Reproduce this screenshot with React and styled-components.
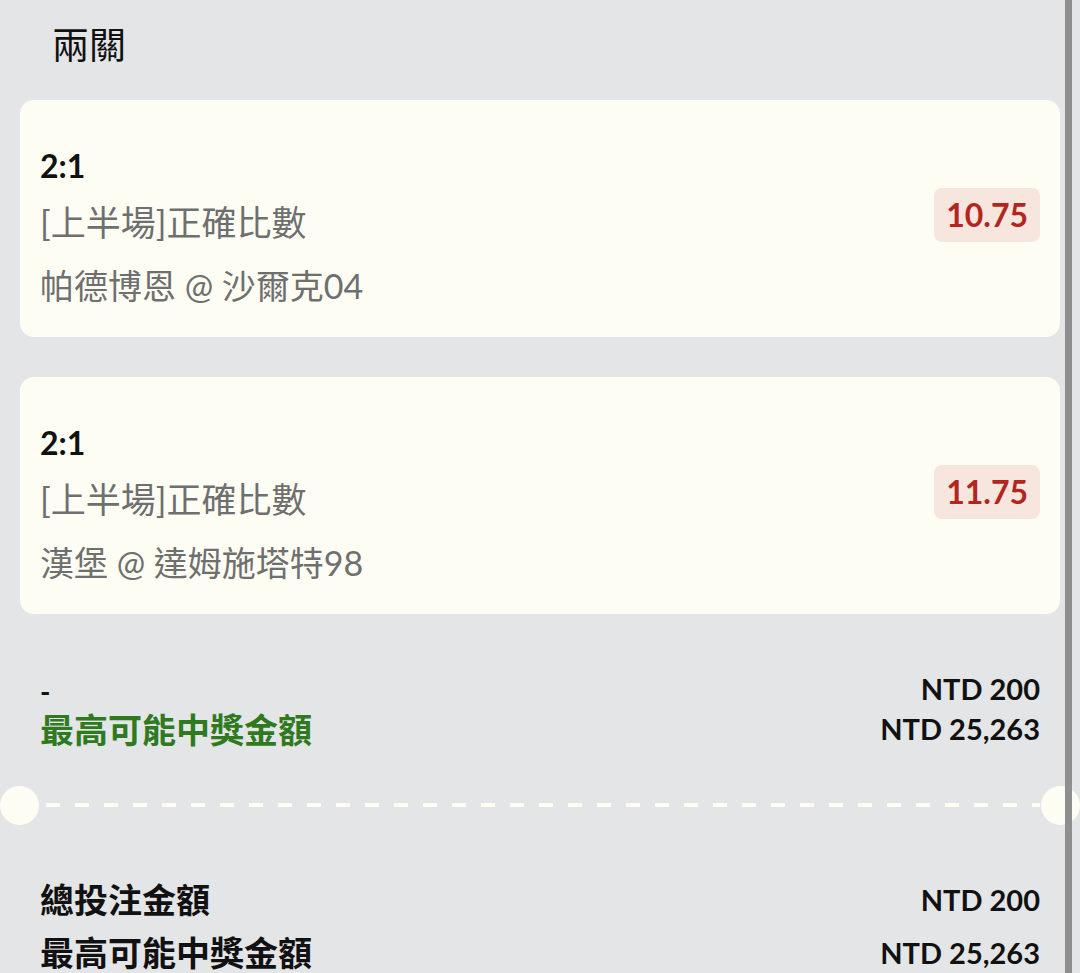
import styled, { createGlobalStyle } from "styled-components";

const GlobalStyle = createGlobalStyle`
  body {
    margin: 0;
    background: #e4e5e7;
    font-family: Lato, "Noto Sans CJK TC", sans-serif;
    color: #111;
  }
`;

const bets = [
  { score: "2:1", market: "[上半場]正確比數", match: "帕德博恩 @ 沙爾克04", odds: "10.75" },
  { score: "2:1", market: "[上半場]正確比數", match: "漢堡 @ 達姆施塔特98", odds: "11.75" },
];

export default function App() {
  return (
    <Page>
      <GlobalStyle />
      <Title>兩關</Title>
      <CardList>
        {bets.map((bet, i) => (
          <Card key={i}>
            <Info>
              <Score>{bet.score}</Score>
              <Market>{bet.market}</Market>
              <Match>{bet.match}</Match>
            </Info>
            <Odds>{bet.odds}</Odds>
          </Card>
        ))}
      </CardList>
      <Summary>
        <Dash>-</Dash>
        <Amount>NTD 200</Amount>
        <WinLabel>最高可能中獎金額</WinLabel>
        <Amount>NTD 25,263</Amount>
      </Summary>
      <Divider>
        <Hole />
        <DashLine />
        <Hole />
      </Divider>
      <Totals>
        <TotalLabel>總投注金額</TotalLabel>
        <TotalAmount>NTD 200</TotalAmount>
        <TotalLabel>最高可能中獎金額</TotalLabel>
        <TotalAmount>NTD 25,263</TotalAmount>
      </Totals>
      <ScrollBar />
    </Page>
  );
}

const Page = styled.div`
  width: 1080px;
  min-height: 973px;
  overflow: hidden;
`;

const Title = styled.div`
  height: 100px;
  box-sizing: border-box;
  padding: 0 0 14px 52px;
  display: flex;
  align-items: center;
  font-size: 37px;
  color: #111;
`;

const CardList = styled.div`
  display: flex;
  flex-direction: column;
  gap: 40px;
  padding: 0 20px;
`;

const Card = styled.div`
  height: 237px;
  box-sizing: border-box;
  background: #fdfdf4;
  border-radius: 14px;
  padding: 38px 20px 0 20px;
  display: flex;
  align-items: flex-start;
  justify-content: space-between;
`;

const Info = styled.div`
  display: flex;
  flex-direction: column;
`;

const Score = styled.div`
  font-size: 32px;
  font-weight: 700;
  line-height: 56px;
  color: #111;
`;

const Market = styled.div`
  font-size: 35px;
  line-height: 56px;
  color: #6f6f6f;
`;

const Match = styled.div`
  font-size: 34px;
  line-height: 72px;
  color: #6f6f6f;
`;

const Odds = styled.div`
  margin-top: 50px;
  height: 54px;
  line-height: 54px;
  padding: 0 12px;
  border-radius: 8px;
  background: #f6e6de;
  color: #b3261e;
  font-size: 32px;
  font-weight: 700;
`;

const Summary = styled.div`
  display: grid;
  grid-template-columns: 1fr auto;
  padding: 56px 40px 0 40px;
`;

const Dash = styled.div`
  font-size: 28px;
  font-weight: 700;
  line-height: 38px;
  padding-top: 2px;
`;

const Amount = styled.div`
  font-size: 29px;
  font-weight: 700;
  line-height: 38px;
  text-align: right;
`;

const WinLabel = styled.div`
  font-size: 34px;
  font-weight: 700;
  line-height: 40px;
  color: #2f7a1f;
`;

const Divider = styled.div`
  display: flex;
  align-items: center;
  margin-top: 35px;
  height: 40px;
`;

const Hole = styled.div`
  width: 39px;
  height: 39px;
  border-radius: 50%;
  background: #fdfdf4;
  flex-shrink: 0;
`;

const DashLine = styled.div`
  flex: 1;
  height: 4px;
  margin: 0 1px 0 7px;
  background: repeating-linear-gradient(
    to right,
    #fdfdf4 0 14px,
    transparent 14px 29px
  );
`;

const Totals = styled.div`
  display: grid;
  grid-template-columns: 1fr auto;
  padding: 48px 40px 0 40px;
`;

const TotalLabel = styled.div`
  font-size: 34px;
  font-weight: 700;
  line-height: 53px;
`;

const TotalAmount = styled.div`
  font-size: 29px;
  font-weight: 700;
  line-height: 53px;
  text-align: right;
`;

const ScrollBar = styled.div`
  position: fixed;
  top: 0;
  bottom: 0;
  right: 8px;
  width: 7px;
  background: #8f8f8f;
`;
